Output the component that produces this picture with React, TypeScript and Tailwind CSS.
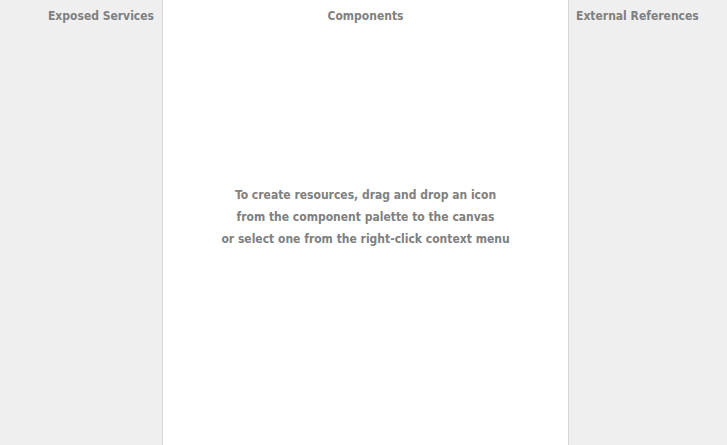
export default function App() {
  return (
    <div className="grid min-h-screen grid-cols-[163px_1fr_159px] bg-white font-['DejaVu_Sans_Condensed','DejaVu_Sans','Noto_Sans',sans-serif] text-[12px] leading-[22px] font-bold text-[#808080]">
      <aside className="border-r border-[#d6d6d6] bg-[#efefef] px-2 pt-[5px] text-right">
        <h2>Exposed Services</h2>
      </aside>
      <main className="flex flex-col pt-[5px] text-center">
        <h2>Components</h2>
        <div className="flex flex-1 flex-col justify-center pb-[38px]">
          <p>To create resources, drag and drop an icon</p>
          <p>from the component palette to the canvas</p>
          <p>or select one from the right-click context menu</p>
        </div>
      </main>
      <aside className="border-l border-[#d6d6d6] bg-[#efefef] px-[7px] pt-[5px]">
        <h2>External References</h2>
      </aside>
    </div>
  );
}
